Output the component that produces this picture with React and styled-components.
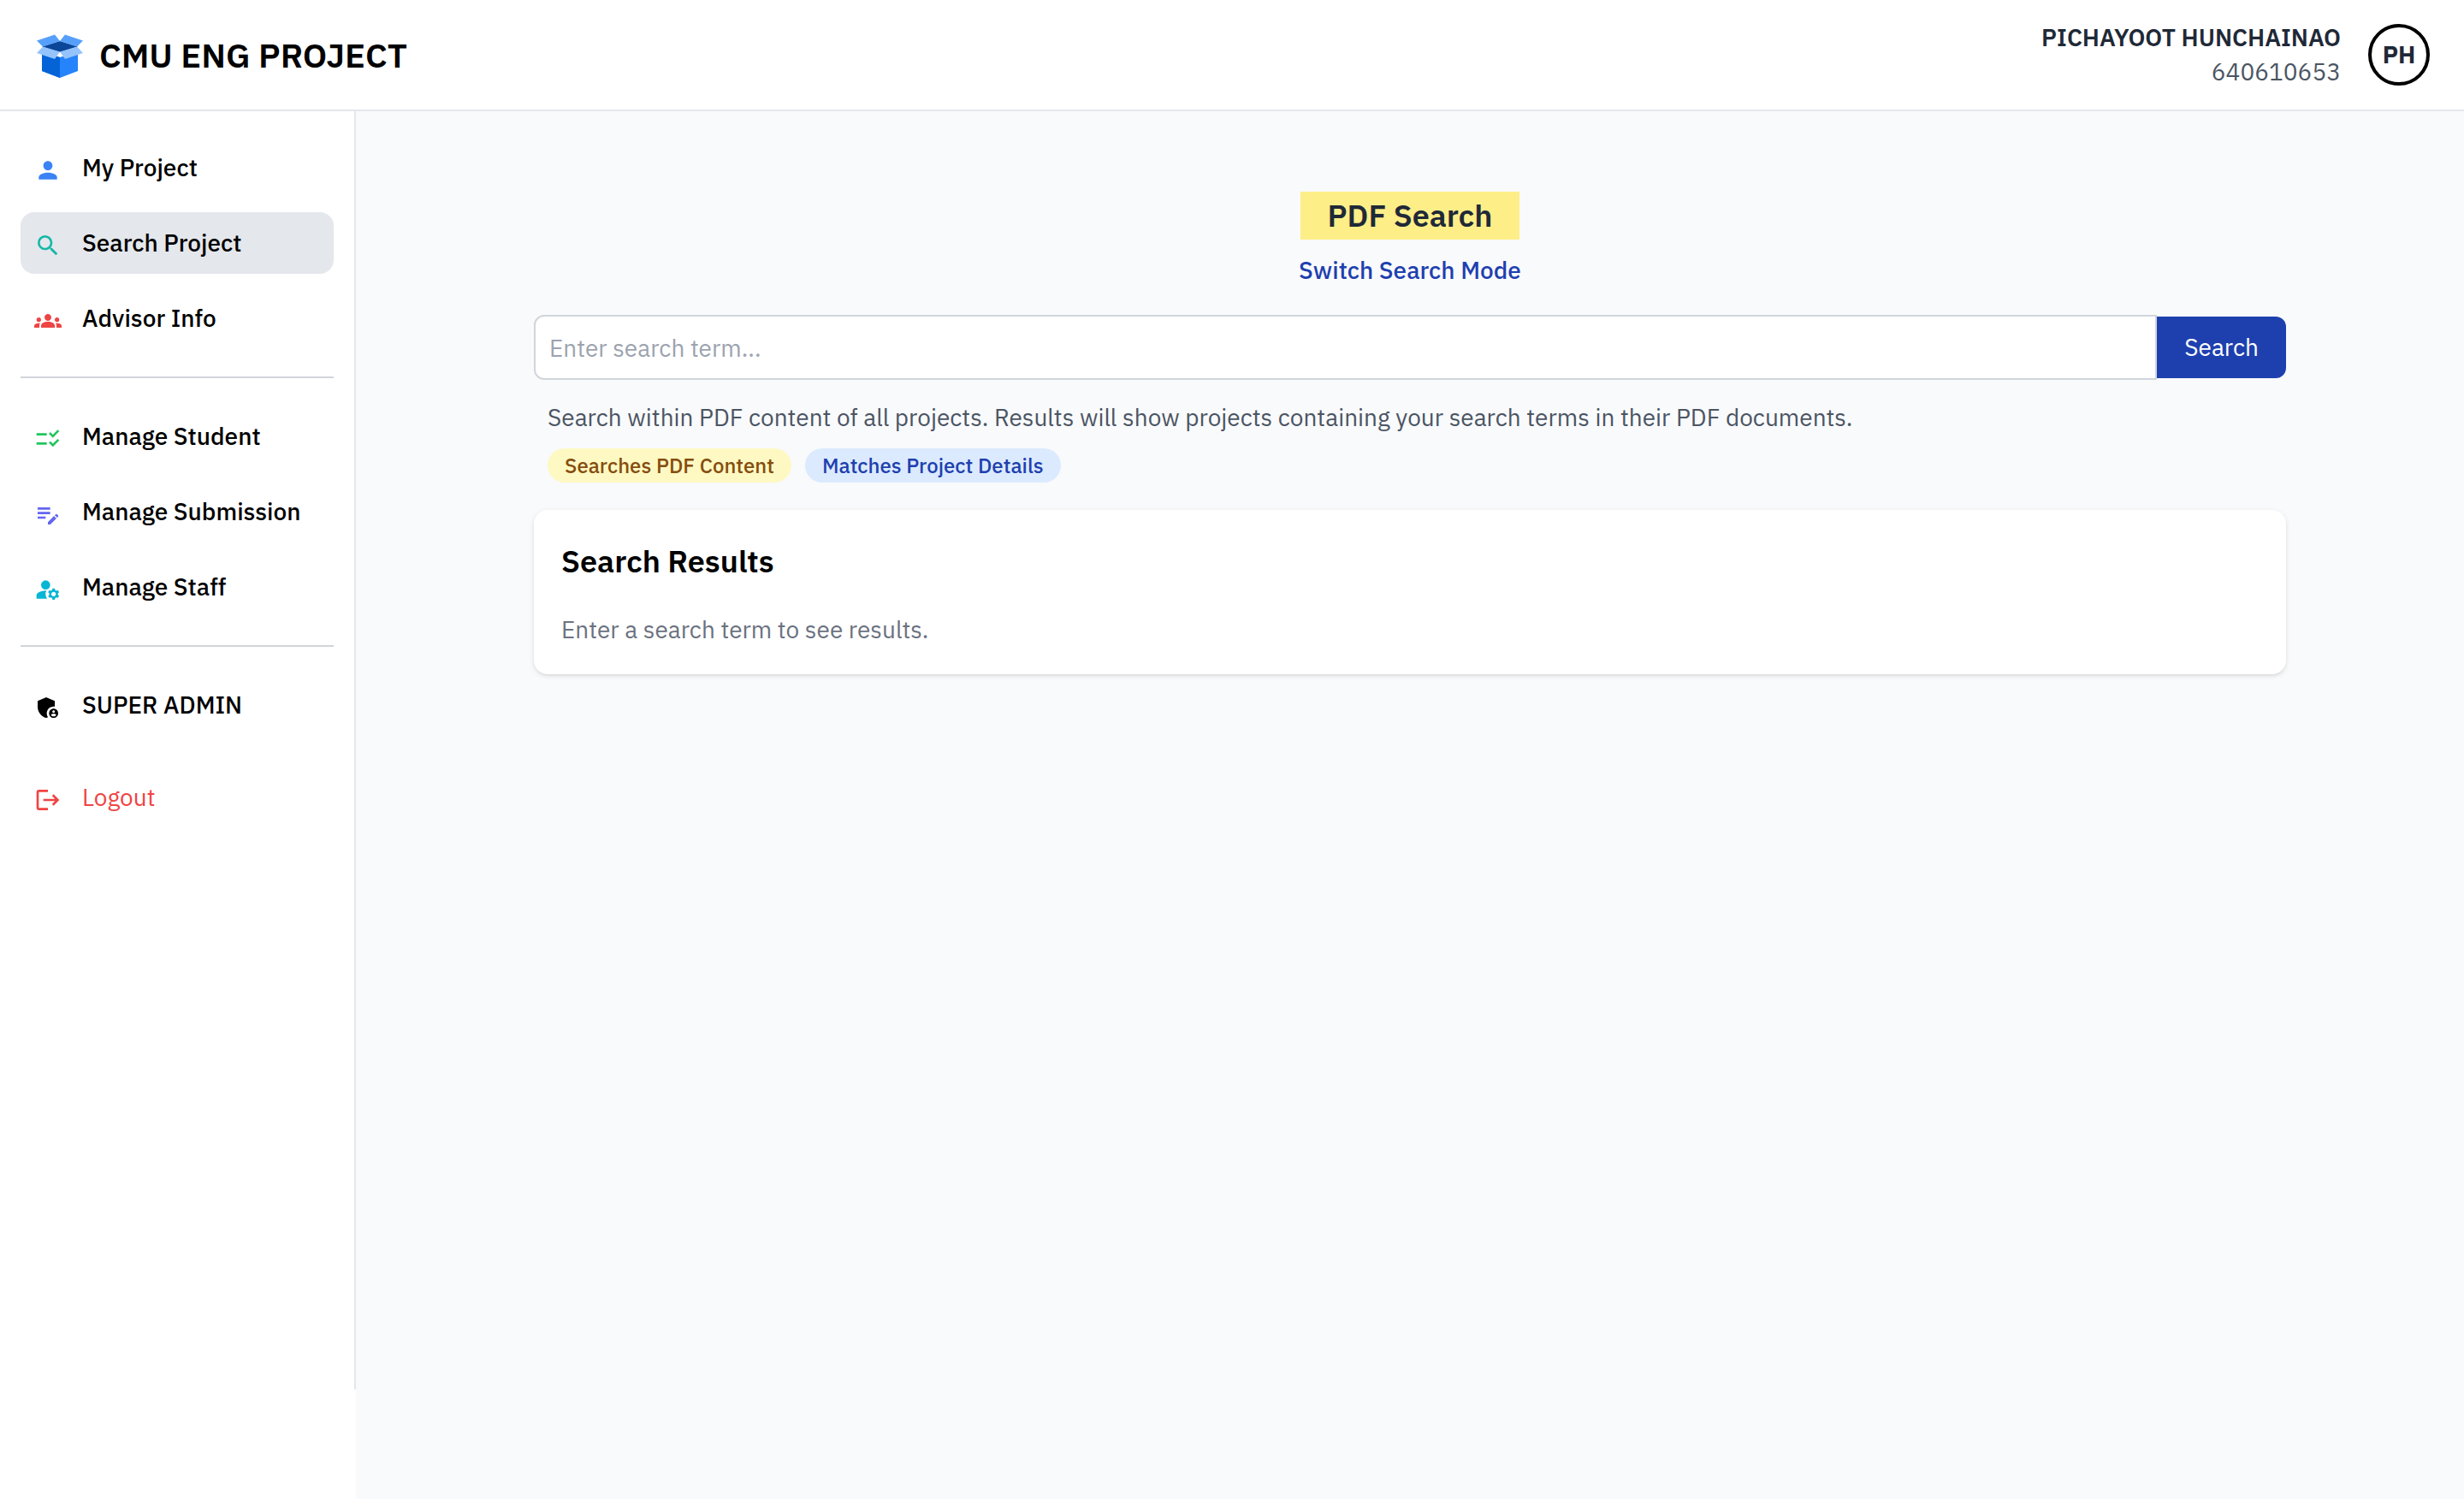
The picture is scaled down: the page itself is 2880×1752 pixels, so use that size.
import React, { useState } from "react";
import styled, { createGlobalStyle, css } from "styled-components";
import {
  MdPerson,
  MdSearch,
  MdGroups,
  MdChecklistRtl,
  MdEditNote,
  MdManageAccounts,
  MdAdminPanelSettings,
  MdLogout,
} from "react-icons/md";

const GlobalStyle = createGlobalStyle`
  *, *::before, *::after { box-sizing: border-box; }
  body {
    margin: 0;
    background: #f9fafc;
    color: #000;
    font-family: "IBM Plex Sans", Roboto, "Noto Sans", sans-serif;
    font-size: 28px;
    line-height: 40px;
  }
  h1, h2, p, ul { margin: 0; padding: 0; }
  input, button { font: inherit; }
`;

const Page = styled.div`
  display: flex;
  flex-direction: column;
  min-height: 100vh;
`;

const Header = styled.header`
  display: flex;
  align-items: center;
  justify-content: space-between;
  height: 130px;
  padding: 0 40px;
  background: #fff;
  border-bottom: 2px solid #e4e7ec;
`;

const Brand = styled.a`
  display: flex;
  align-items: center;
  gap: 16px;
  color: #000;
  font-size: 40px;
  font-weight: 600;
  line-height: 56px;
  text-decoration: none;
`;

const LogoMark = styled.svg`
  width: 60px;
  height: 60px;
`;

const Account = styled.div`
  display: flex;
  align-items: center;
  gap: 32px;
  color: #1f2937;
`;

const AccountText = styled.div`
  text-align: right;
`;

const AccountName = styled.p`
  font-weight: 600;
`;

const AccountId = styled.p`
  color: #4b5563;
`;

const Avatar = styled.div`
  display: grid;
  place-items: center;
  width: 72px;
  height: 72px;
  border: 4px solid #000;
  border-radius: 50%;
  font-weight: 700;
`;

const Body = styled.div`
  flex: 1;
  display: flex;
`;

const SidebarColumn = styled.div`
  flex: none;
  display: flex;
  width: 416px;
  padding-bottom: 128px;
  background: #fff;
`;

const Sidebar = styled.nav`
  flex: 1;
  padding: 30px 24px;
  border-right: 2px solid #e4e7ec;
`;

const NavGroup = styled.ul`
  display: flex;
  flex-direction: column;
  gap: 16px;
  list-style: none;

  & + & {
    margin-top: 32px;
    padding-top: 32px;
    border-top: 2px solid #d1d5db;
  }
`;

const navItem = css`
  display: flex;
  align-items: center;
  gap: 24px;
  width: 100%;
  height: 72px;
  padding: 0 16px;
  border: 0;
  border-radius: 16px;
  text-align: left;
  text-decoration: none;
  cursor: pointer;
`;

const NavLink = styled.a`
  ${navItem}
  background: ${(p) => (p.$active ? "#e4e7ec" : "transparent")};
  color: #000;
  font-weight: 500;
`;

const LogoutButton = styled.button`
  ${navItem}
  margin-top: 36px;
  background: transparent;
  color: #ef4444;
`;

const NavIcon = styled.span`
  display: flex;
  padding-top: 6px;
  color: ${(p) => p.$color};
  font-size: 32px;
`;

const Main = styled.main`
  flex: 1;
  display: flex;
  flex-direction: column;
  align-items: center;
  padding: 94px 32px 32px;
`;

const Content = styled.div`
  display: flex;
  flex-direction: column;
  width: 100%;
  max-width: 2048px;
`;

const ModeHeading = styled.div`
  display: flex;
  flex-direction: column;
  align-items: center;
  gap: 16px;
  margin-bottom: 32px;
`;

const ModeTitle = styled.h1`
  padding: 0 32px;
  background: #feee88;
  color: #1f2937;
  font-size: 36px;
  font-weight: 600;
  line-height: 56px;
`;

const ModeSwitch = styled.button`
  padding: 0;
  border: 0;
  background: none;
  color: #1e40af;
  font-weight: 500;
  cursor: pointer;
`;

const SearchForm = styled.form`
  display: flex;
  align-items: center;
`;

const SearchInput = styled.input`
  flex: 1;
  min-width: 0;
  height: 76px;
  padding: 0 16px;
  border: 2px solid #d1d5db;
  border-radius: 12px 0 0 12px;
  background: #fff;
  color: #000;
  outline: none;

  &::placeholder {
    color: #9ca3af;
    opacity: 1;
  }
`;

const SearchButton = styled.button`
  height: 72px;
  padding: 0 32px;
  border: 0;
  border-radius: 0 12px 12px 0;
  background: #1e40af;
  color: #fff;
  cursor: pointer;
`;

const Hint = styled.div`
  margin: 24px 0 32px;
  padding: 0 16px;
  color: #4b5563;
`;

const Chips = styled.div`
  display: flex;
  gap: 16px;
  margin-top: 16px;
`;

const tones = {
  yellow: css`background: #fef9c3; color: #854d0e;`,
  blue: css`background: #dbeafe; color: #1e40af;`,
};

const Chip = styled.span`
  padding: 4px 20px;
  border-radius: 20px;
  font-size: 24px;
  font-weight: 500;
  line-height: 32px;
  ${(p) => tones[p.$tone]}
`;

const ResultsCard = styled.section`
  padding: 32px;
  border-radius: 16px;
  background: #fff;
  box-shadow: 0 2px 6px rgba(0, 0, 0, 0.1), 0 2px 4px -2px rgba(0, 0, 0, 0.1);
`;

const ResultsTitle = styled.h2`
  margin-bottom: 32px;
  font-size: 36px;
  font-weight: 600;
  line-height: 56px;
`;

const EmptyText = styled.p`
  color: #6b7280;
`;

function Logo() {
  return (
    <LogoMark viewBox="0 0 60 60" aria-hidden="true">
      <path d="M9 26 30 33 51 26V49L30 57 9 49Z" fill="#2583fb" />
      <path d="M9 26 30 33V57L9 49Z" fill="#0563d8" />
      <path d="M9 20.500 30 14 51 20.500 30 27Z" fill="#0b4699" />
      <path d="M3 13.500 24 6.500 30 14 10 20.500Z" fill="#56a0fb" />
      <path d="M57 13.500 36 6.500 30 14 50 20.500Z" fill="#56a0fb" />
      <path d="M10 20.500 30 26.500 24 35 3 28Z" fill="#94c3fd" />
      <path d="M50 20.500 30 26.500 36 35 57 28Z" fill="#94c3fd" />
    </LogoMark>
  );
}

const groups = [
  [
    { label: "My Project", icon: MdPerson, color: "#3b82f6" },
    { label: "Search Project", icon: MdSearch, color: "#14b8a6", active: true },
    { label: "Advisor Info", icon: MdGroups, color: "#ef4444" },
  ],
  [
    { label: "Manage Student", icon: MdChecklistRtl, color: "#22c55e" },
    { label: "Manage Submission", icon: MdEditNote, color: "#6366f1" },
    { label: "Manage Staff", icon: MdManageAccounts, color: "#06b6d4" },
  ],
  [{ label: "SUPER ADMIN", icon: MdAdminPanelSettings, color: "#000" }],
];

export default function App() {
  const [term, setTerm] = useState("");

  return (
    <Page>
      <GlobalStyle />
      <Header>
        <Brand href="#">
          <Logo />
          CMU ENG PROJECT
        </Brand>
        <Account>
          <AccountText>
            <AccountName>PICHAYOOT HUNCHAINAO</AccountName>
            <AccountId>640610653</AccountId>
          </AccountText>
          <Avatar>PH</Avatar>
        </Account>
      </Header>
      <Body>
        <SidebarColumn>
          <Sidebar>
            {groups.map((items) => (
              <NavGroup key={items[0].label}>
                {items.map(({ label, icon: Icon, color, active }) => (
                  <li key={label}>
                    <NavLink href="#" $active={active} aria-current={active ? "page" : undefined}>
                      <NavIcon $color={color}>
                        <Icon />
                      </NavIcon>
                      {label}
                    </NavLink>
                  </li>
                ))}
              </NavGroup>
            ))}
            <LogoutButton type="button">
              <NavIcon>
                <MdLogout />
              </NavIcon>
              Logout
            </LogoutButton>
          </Sidebar>
        </SidebarColumn>
        <Main>
          <Content>
            <ModeHeading>
              <ModeTitle>PDF Search</ModeTitle>
              <ModeSwitch type="button">Switch Search Mode</ModeSwitch>
            </ModeHeading>
            <SearchForm onSubmit={(e) => e.preventDefault()}>
              <SearchInput
                type="text"
                aria-label="Search term"
                placeholder="Enter search term..."
                value={term}
                onChange={(e) => setTerm(e.target.value)}
              />
              <SearchButton type="submit">Search</SearchButton>
            </SearchForm>
            <Hint>
              <p>
                Search within PDF content of all projects. Results will show projects containing your search
                terms in their PDF documents.
              </p>
              <Chips>
                <Chip $tone="yellow">Searches PDF Content</Chip>
                <Chip $tone="blue">Matches Project Details</Chip>
              </Chips>
            </Hint>
            <ResultsCard>
              <ResultsTitle>Search Results</ResultsTitle>
              <EmptyText>Enter a search term to see results.</EmptyText>
            </ResultsCard>
          </Content>
        </Main>
      </Body>
    </Page>
  );
}
